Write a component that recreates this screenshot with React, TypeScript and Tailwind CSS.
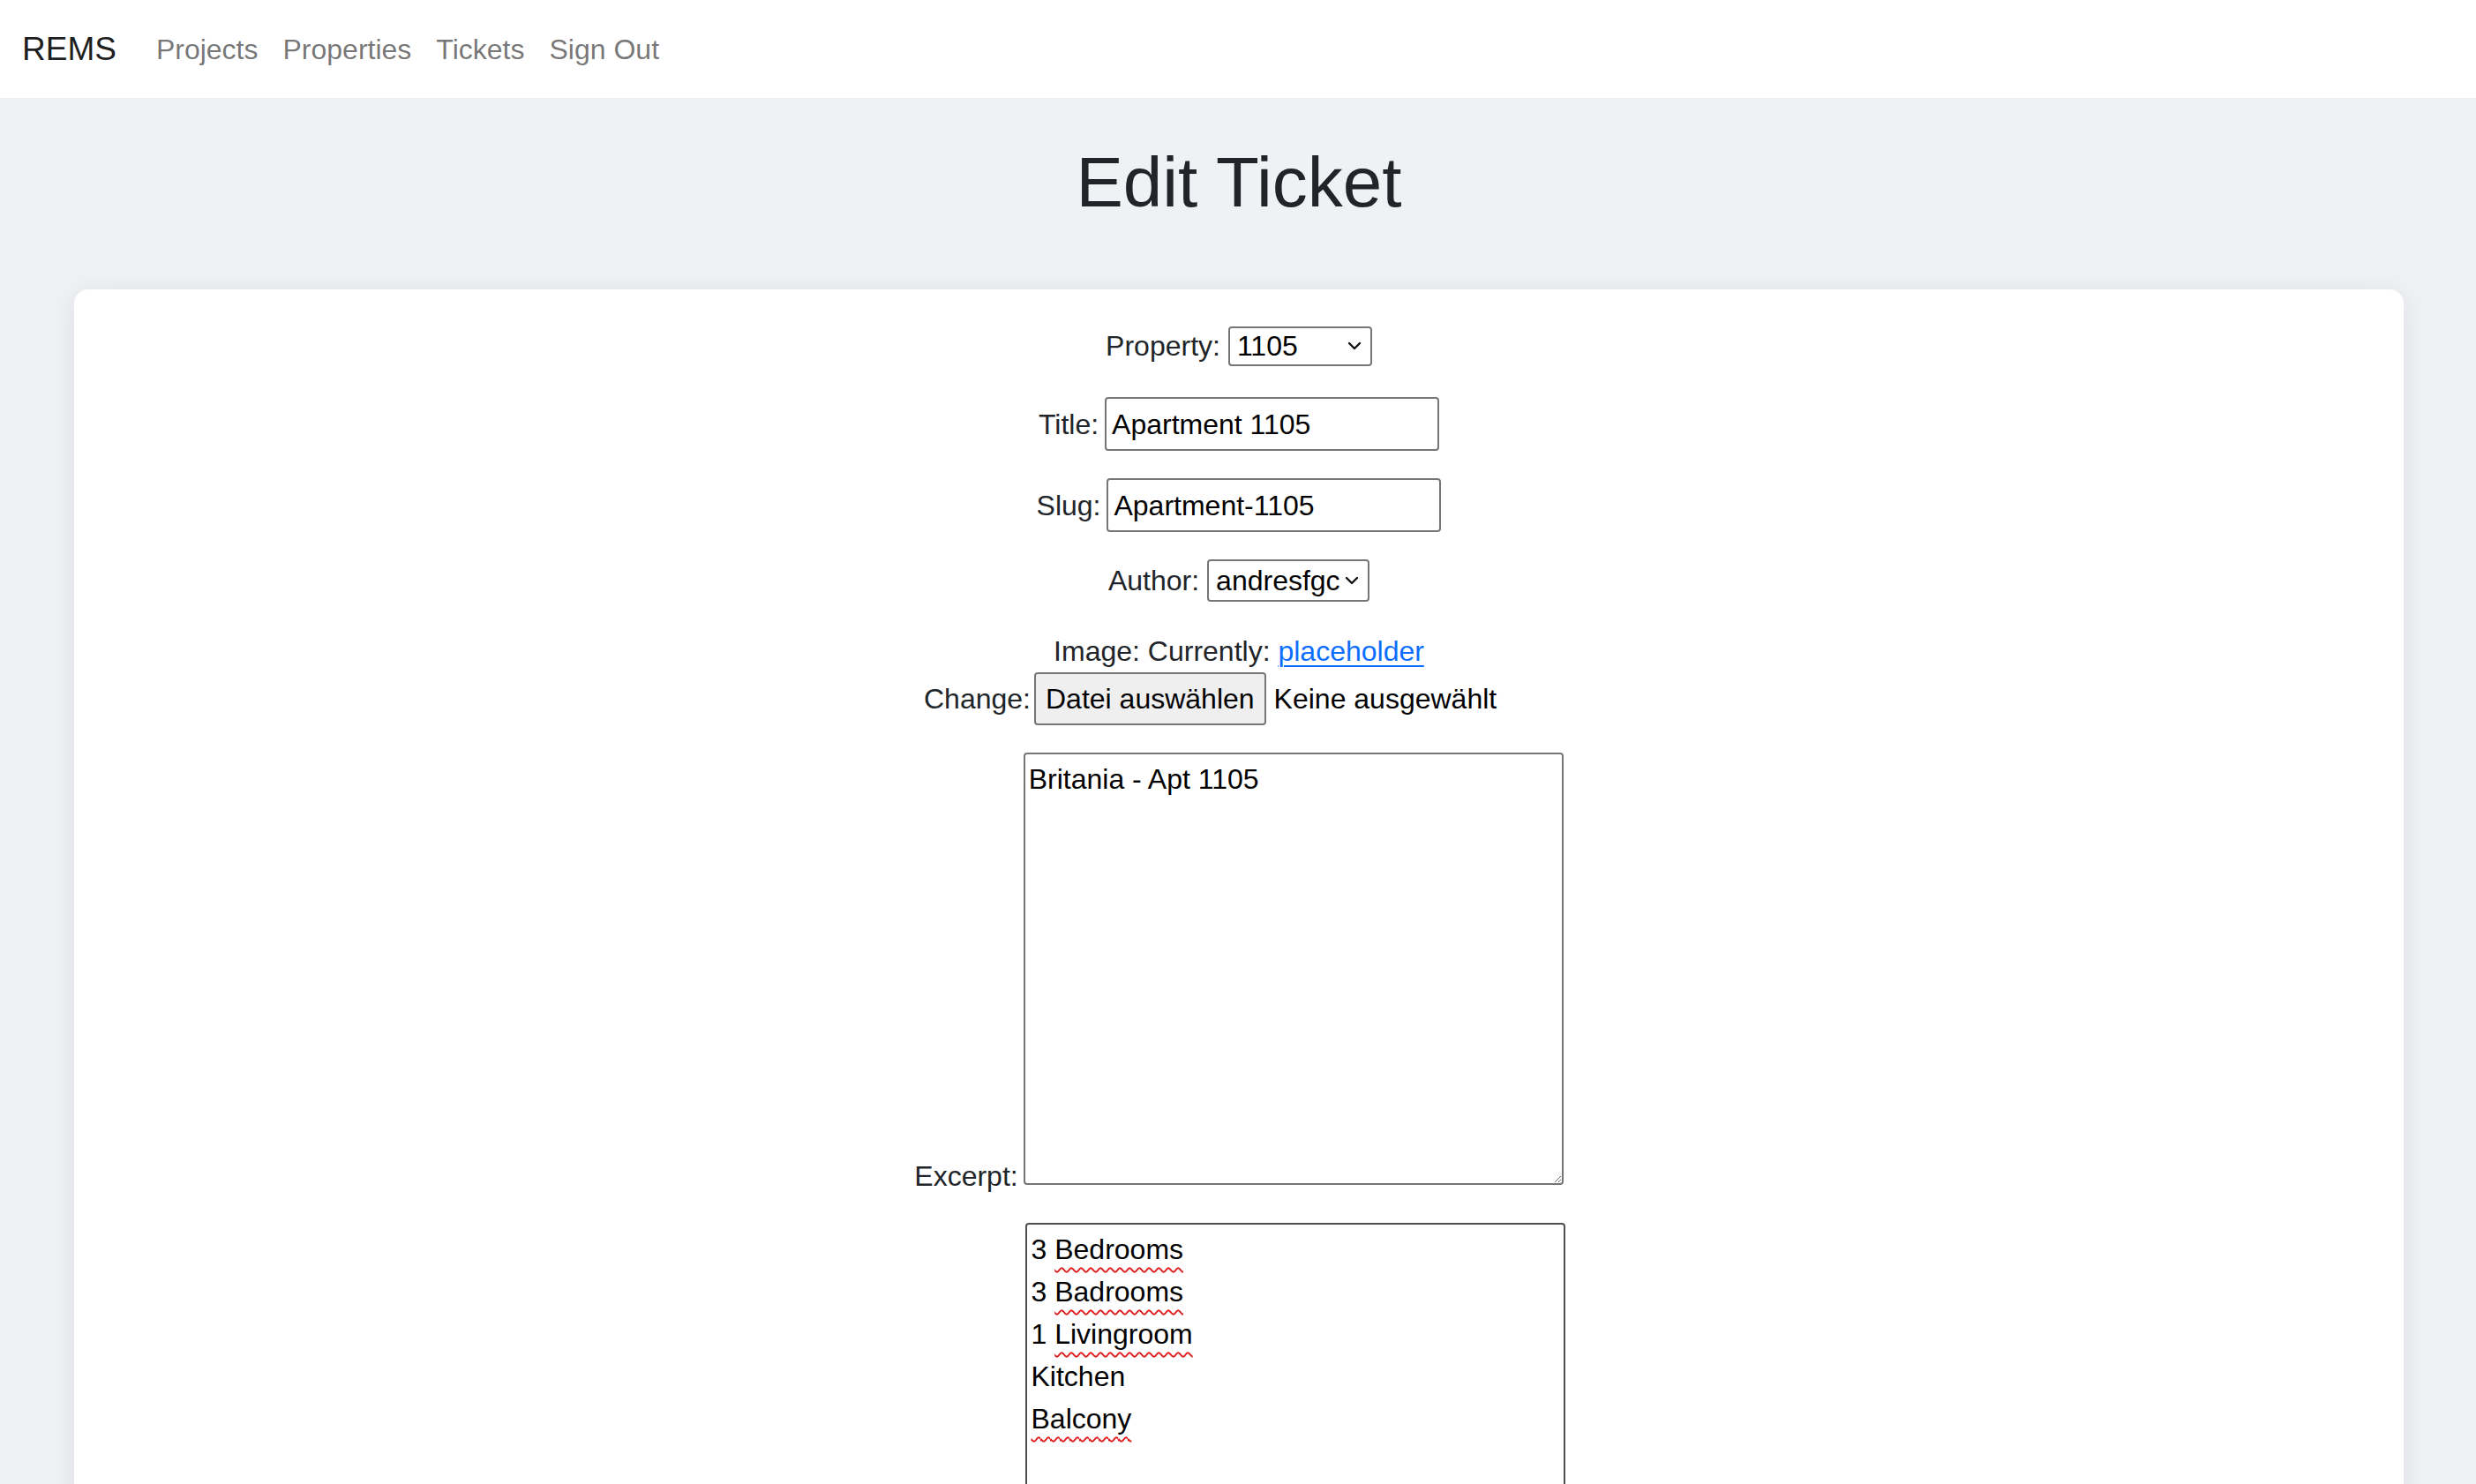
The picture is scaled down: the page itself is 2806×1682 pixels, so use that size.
import React from 'react';

const font = "font-['Liberation_Sans',Arial,sans-serif]";

function Chevron() {
  return (
    <svg width="16" height="10" viewBox="0 0 16 10" fill="none" stroke="#111" strokeWidth="2.4" strokeLinecap="round" strokeLinejoin="round">
      <path d="M2 2l6 6 6-6" />
    </svg>
  );
}

function Select({ value, width, height }: { value: string; width: string; height: string }) {
  return (
    <div className={`${width} ${height} ml-[9px] flex items-center justify-between rounded-[4px] border-2 border-[#767676] bg-white pl-[8px] pr-[10px] text-[32px] text-black`}>
      <span>{value}</span>
      <Chevron />
    </div>
  );
}

function TextInput({ value }: { value: string }) {
  return (
    <div className="ml-[7px] flex h-[61px] w-[379px] items-center rounded-[4px] border-2 border-[#767676] bg-white px-[6px] text-[32px] text-black">
      {value}
    </div>
  );
}

const navLinks = ['Projects', 'Properties', 'Tickets', 'Sign Out'];

const details = [
  { n: '3', word: 'Bedrooms', bad: true },
  { n: '3', word: 'Badrooms', bad: true },
  { n: '1', word: 'Livingroom', bad: true },
  { n: '', word: 'Kitchen', bad: false },
  { n: '', word: 'Balcony', bad: true },
];

export default function App() {
  return (
    <div className={`${font} min-h-screen bg-[#f0f1f5] text-[#212529]`}>
      {/* Navbar */}
      <nav className="flex h-[111px] items-center bg-white px-[25px]">
        <span className="mr-[31px] text-[37px] text-black/90">REMS</span>
        {navLinks.map((l) => (
          <a key={l} className="px-[14px] text-[32px] text-black/55">
            {l}
          </a>
        ))}
      </nav>

      <main className="pl-[84px] pr-[82px] pb-[64px]">
        <h1 className="pt-[48px] pb-[73px] text-center text-[80px] font-medium leading-[96px]">Edit Ticket</h1>

        <div className="flex flex-col items-center rounded-[16px] bg-white pt-[40px] pb-[80px] text-[32px] shadow-[0_4px_32px_rgba(0,0,0,0.08)]">
          {/* Property */}
          <div className="flex h-[48px] items-center">
            <span>Property:</span>
            <Select value="1105" width="w-[163px]" height="h-[45px]" />
          </div>

          {/* Title */}
          <div className="mt-[34px] flex h-[61px] items-center">
            <span>Title:</span>
            <TextInput value="Apartment 1105" />
          </div>

          {/* Slug */}
          <div className="mt-[31px] flex h-[61px] items-center">
            <span>Slug:</span>
            <TextInput value="Apartment-1105" />
          </div>

          {/* Author */}
          <div className="mt-[31px] flex h-[48px] items-center">
            <span>Author:</span>
            <Select value="andresfgc" width="w-[184px]" height="h-[48px]" />
          </div>

          {/* Image */}
          <div className="mt-[32px] flex h-[48px] items-center">
            <span>Image: Currently:&nbsp;</span>
            <a className="text-[#0d6efd] underline decoration-2 underline-offset-[5px]">placeholder</a>
          </div>
          <div className="flex h-[60px] items-center">
            <span>Change:</span>
            <div className="ml-[4px] flex w-[589px] items-center">
              <span className="flex h-[60px] items-center rounded-[4px] border-2 border-[#767676] bg-[#efefef] px-[11px] text-black">
                Datei auswählen
              </span>
              <span className="ml-[9px] text-black">Keine ausgewählt</span>
            </div>
          </div>

          {/* Excerpt */}
          <div className="mt-[31px] flex items-end">
            <span className="mb-[-6px] mr-[6px] leading-[32px]">Excerpt:</span>
            <textarea
              readOnly
              defaultValue="Britania - Apt 1105"
              className="h-[490px] w-[612px] resize-y rounded-[4px] border-2 border-[#767676] bg-white px-[4px] py-[4px] text-[32px] leading-[48px] text-black outline-none"
            />
          </div>

          <div className="mt-[43px] flex items-end">
            <span className="w-[127px]" />
            <div className="h-[490px] w-[612px] rounded-[4px] border-2 border-[#4f4f4f] bg-white px-[5px] py-[4px] text-[32px] leading-[48px] text-black">
              {details.map((d, i) => (
                <div key={i}>
                  {d.n && <span>{d.n} </span>}
                  <span className={d.bad ? 'underline decoration-wavy decoration-[#e01b1b] decoration-[2px] underline-offset-[9px]' : ''}>
                    {d.word}
                  </span>
                </div>
              ))}
            </div>
          </div>
        </div>
      </main>
    </div>
  );
}
